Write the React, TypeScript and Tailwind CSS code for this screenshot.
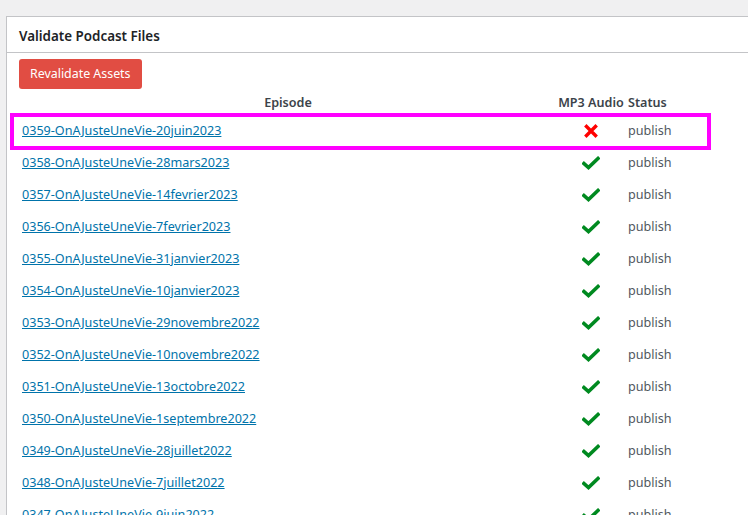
const episodes = [
  { name: "0359-OnAJusteUneVie-20juin2023", ok: false },
  { name: "0358-OnAJusteUneVie-28mars2023", ok: true },
  { name: "0357-OnAJusteUneVie-14fevrier2023", ok: true },
  { name: "0356-OnAJusteUneVie-7fevrier2023", ok: true },
  { name: "0355-OnAJusteUneVie-31janvier2023", ok: true },
  { name: "0354-OnAJusteUneVie-10janvier2023", ok: true },
  { name: "0353-OnAJusteUneVie-29novembre2022", ok: true },
  { name: "0352-OnAJusteUneVie-10novembre2022", ok: true },
  { name: "0351-OnAJusteUneVie-13octobre2022", ok: true },
  { name: "0350-OnAJusteUneVie-1septembre2022", ok: true },
  { name: "0349-OnAJusteUneVie-28juillet2022", ok: true },
  { name: "0348-OnAJusteUneVie-7juillet2022", ok: true },
  { name: "0347-OnAJusteUneVie-9juin2022", ok: true },
];

function CheckIcon() {
  return (
    <svg width="18" height="14" viewBox="0 0 18 14">
      <path d="M2 7.5 L6.5 11.5 L16 2.5" fill="none" stroke="#008a20" strokeWidth="3.6" strokeLinecap="square" />
    </svg>
  );
}

function CrossIcon() {
  return (
    <svg width="14" height="14" viewBox="0 0 14 14">
      <path d="M2.5 2.5 L11.5 11.5 M11.5 2.5 L2.5 11.5" fill="none" stroke="#ff0000" strokeWidth="3.4" strokeLinecap="square" />
    </svg>
  );
}

export default function App() {
  return (
    <div className="h-[515px] overflow-hidden bg-[#f0f0f1] pt-[16px] font-['Noto_Sans',sans-serif] text-[12.6px] text-[#3c434a]">
      <div className="ml-[6px] w-[780px] border border-[#c3c4c7] bg-white">
        {/* panel header */}
        <div className="flex h-[36px] items-center border-b border-[#c3c4c7] px-[12px] pt-[3px]">
          <h2 className="text-[13.4px] font-semibold text-[#1d2327]">Validate Podcast Files</h2>
        </div>

        <div className="pt-[6px]">
          <button className="ml-[12px] h-[30px] rounded-[3px] bg-[#e14d43] px-[11px] text-[12.4px] text-white">
            Revalidate Assets
          </button>

          <div className="ml-[6px] mt-[2px]">
            <div className="flex h-[24px] items-center font-semibold text-[#3c434a]">
              <div className="w-[544px] pl-[6px] text-center">Episode</div>
              <div className="w-[68px] text-center whitespace-nowrap">MP3 Audio</div>
              <div className="w-[60px] pl-[3px]">Status</div>
            </div>

            {episodes.map((ep, i) => (
              <div key={ep.name} className="relative flex h-[32px] items-center">
                {i === 0 && (
                  <div className="pointer-events-none absolute left-[-3px] top-[-2px] h-[37px] w-[701px] border-[4px] border-[#ff00ff]" />
                )}
                <div className="w-[544px] pl-[9px]">
                  <a href="#" className="text-[#0073aa] underline">
                    {ep.name}
                  </a>
                </div>
                <div className="flex w-[68px] justify-center">
                  {ep.ok ? <CheckIcon /> : <CrossIcon />}
                </div>
                <div className="w-[60px] pl-[3px] text-[#50575e]">publish</div>
              </div>
            ))}
          </div>
        </div>
      </div>
    </div>
  );
}
